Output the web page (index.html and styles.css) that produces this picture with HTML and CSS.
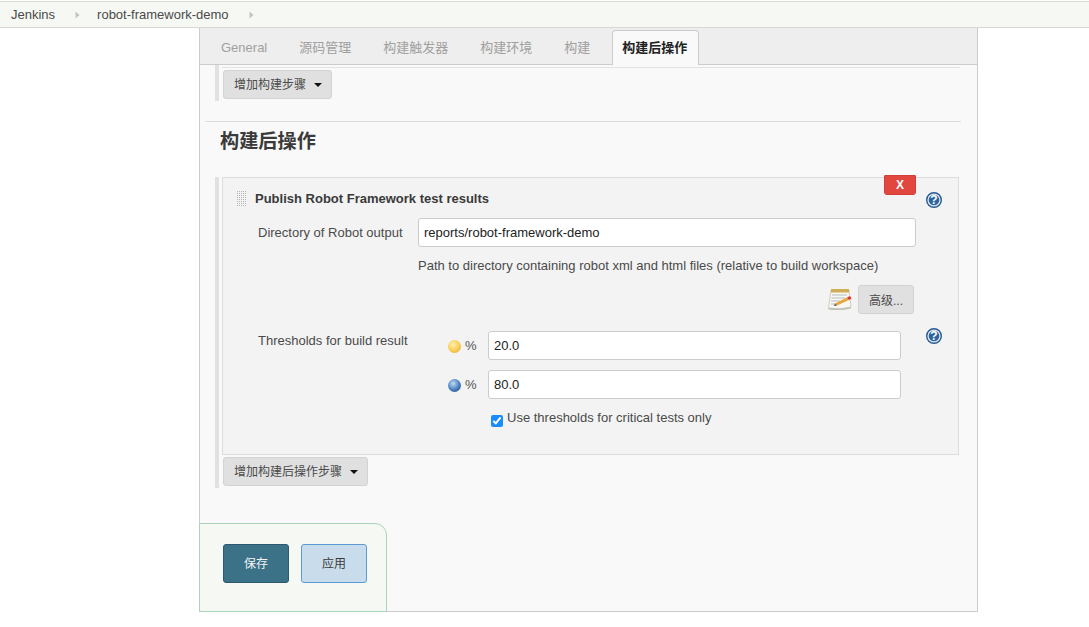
FILE: index.html

```html
<!DOCTYPE html>
<html lang="zh">
<head>
    <meta charset="UTF-8">
    <title>robot-framework-demo Config [Jenkins]</title>
    <link rel="stylesheet" href="styles.css">
</head>
<body>

<div class="breadcrumbs">
    <a class="crumb">Jenkins</a>
    <svg class="crumb-arrow" width="5" height="8" viewBox="0 0 5 8"><path d="M0.5 0.5 L4.5 4 L0.5 7.5 Z"/></svg>
    <a class="crumb">robot-framework-demo</a>
    <svg class="crumb-arrow" width="5" height="8" viewBox="0 0 5 8"><path d="M0.5 0.5 L4.5 4 L0.5 7.5 Z"/></svg>
</div>

<div class="panel">
    <div class="tabs">
        <div class="tab">General</div>
        <div class="tab">源码管理</div>
        <div class="tab">构建触发器</div>
        <div class="tab">构建环境</div>
        <div class="tab">构建</div>
        <div class="tab active">构建后操作</div>
    </div>

    <div class="build-steps">
        <div class="prev-line"></div>
        <button class="btn dropdown">增加构建步骤<span class="caret"></span></button>
    </div>

    <div class="section-head">
        <h2>构建后操作</h2>
    </div>

    <div class="steps">
        <div class="step">
            <button class="delete">X</button>
            <div class="step-title">
                <span class="handle"></span>
                <b>Publish Robot Framework test results</b>
                <svg class="help help-title" width="16" height="16" viewBox="0 0 16 16">
                    <circle cx="8" cy="8" r="7.3" fill="#dfe9f3" stroke="#27588f" stroke-width="1.4"/>
                    <circle cx="8" cy="8" r="5.3" fill="#2f659f"/>
                    <text x="8" y="12.200" text-anchor="middle" class="help-mark">?</text>
                </svg>
            </div>

            <div class="row">
                <label class="row-label">Directory of Robot output</label>
                <input class="text-input wide" value="reports/robot-framework-demo">
            </div>
            <div class="row-desc">Path to directory containing robot xml and html files (relative to build workspace)</div>

            <div class="advanced">
                <svg width="24" height="23" viewBox="0 0 24 23">
                    <path d="M3 2 H21 L23 19 Q12 22 0.500 20 Z" fill="#f8f8f0" stroke="#c4c4ba" stroke-width="0.8"/>
                    <path d="M0.500 20 Q12 22 23 19 V20.500 Q12 23 0.500 21.500 Z" fill="#bdbdb6"/>
                    <rect x="3" y="1" width="18" height="3.500" fill="#cfae57"/>
                    <path d="M4 7 H19 M3.500 10 H17 M3 13 H12 M3 16 H8" stroke="#b4bcc6"/>
                    <path d="M7 15.500 L19 9.500 L21 12 L9 17.500 Z" fill="#e6a53f"/>
                    <path d="M19 9.500 L22 8 L23.500 10.500 L21 12 Z" fill="#d9372c"/>
                    <path d="M7 15.500 L6 18 L9 17.500 Z" fill="#5a5040"/>
                </svg>
                <button class="btn adv-btn">高级...</button>
            </div>

            <div class="thresholds">
                <label class="row-label th-label">Thresholds for build result</label>
                <div class="th-fields">
                    <div class="th-row">
                        <span class="ball yellow"></span>
                        <span class="pct">%</span>
                        <input class="text-input narrow" value="20.0">
                    </div>
                    <div class="th-row">
                        <span class="ball blue"></span>
                        <span class="pct">%</span>
                        <input class="text-input narrow" value="80.0">
                    </div>
                    <label class="check-row">
                        <input type="checkbox" checked>
                        <span>Use thresholds for critical tests only</span>
                    </label>
                </div>
                <svg class="help" width="16" height="16" viewBox="0 0 16 16">
                    <circle cx="8" cy="8" r="7.3" fill="#dfe9f3" stroke="#27588f" stroke-width="1.4"/>
                    <circle cx="8" cy="8" r="5.3" fill="#2f659f"/>
                    <text x="8" y="12.200" text-anchor="middle" class="help-mark">?</text>
                </svg>
            </div>
        </div>
        <button class="btn dropdown">增加构建后操作步骤<span class="caret"></span></button>
    </div>

    <div class="bottom-bar">
        <button class="btn-save">保存</button>
        <button class="btn-apply">应用</button>
    </div>
</div>

</body>
</html>
```

FILE: styles.css

```css
html, body { margin: 0; padding: 0; }
body { font-family: "Liberation Sans", "Noto Sans CJK SC", sans-serif; font-size: 13px; color: #333; background: #fff; height: 627px; overflow: hidden; }

.breadcrumbs { margin-top: 1px; height: 25px; display: flex; align-items: center; padding-left: 11px; background: #f6f8f3; border-top: 1px solid #d8d8d4; border-bottom: 1px solid #d8d8d4; }
.crumb { color: #4a4a4a; font-size: 13px; }
.crumb-arrow { fill: #c4c4c4; margin: 1px 17px 0 20px; }

.panel { margin-left: 199px; width: 777px; height: 583px; background: #f9f9f9; border: 1px solid #ccc; border-top: 0; position: relative; }

.tabs { display: flex; height: 36px; padding-left: 10px; background: #eee; border-bottom: 1px solid #ccc; align-items: flex-end; }
.tab { height: 33px; line-height: 33px; padding: 0 10px; margin-right: 10px; border: 1px solid transparent; border-bottom: 0; color: #a0a0a0; white-space: nowrap; }
.tab.active { color: #222; font-weight: bold; background: #f9f9f9; border-color: #ccc; border-radius: 4px 4px 0 0; height: 34px; margin-bottom: -1px; margin-left: 1px; padding: 0 11px 0 9px; }

.build-steps { box-sizing: border-box; margin-left: 15px; border-left: 4px solid #e1e1e1; height: 36px; padding-top: 2px; }
.prev-line { height: 1px; background: #e2e2e2; margin-left: 3px; margin-right: 17px; }

.btn { background: #e0e0e0; border: 1px solid #d3d3d3; border-radius: 3px; color: #4a4a4a; font-family: inherit; font-size: 12px; padding: 0; }
.dropdown { display: flex; align-items: center; height: 29px; padding: 0 9px 2px 10px; margin-left: 4px; margin-top: 2px; }
.caret { width: 0; height: 0; border-left: 4px solid transparent; border-right: 4px solid transparent; border-top: 4px solid #111; margin-left: 8px; margin-top: 3px; }

.section-head { margin: 20px 16px 0 5px; border-top: 1px solid #ddd; height: 55px; }
.section-head h2 { margin: 0; padding: 7px 0 0 15px; font-size: 19.200px; font-weight: bold; line-height: 25px; color: #3a3a3a; }

.steps { margin-left: 15px; border-left: 4px solid #e1e1e1; height: 311px; }

.step { position: relative; margin-left: 3px; width: 735px; height: 276px; background: #f3f3f3; border: 1px solid #ddd; margin-bottom: 2px; }
.steps > .dropdown { margin-top: 0; }
.delete { position: absolute; left: 661px; top: -3px; width: 32px; height: 20px; padding: 0; background: #e1473f; border: 1px solid #d23f38; border-radius: 1px 1px 3px 3px; color: #fff; font-family: inherit; font-size: 12px; font-weight: bold; }

.step-title { display: flex; align-items: center; height: 20px; margin-top: 10px; padding-left: 13px; color: #333; }
.step-title b { font-size: 13px; margin-left: 8px; color: #3a3a3a; }
.handle { width: 11px; height: 17px; margin-top: 1px; background: linear-gradient(#f3f3f3 1px, transparent 1px) 0 0 / 2px 2px, linear-gradient(90deg, #f3f3f3 1px, #b4b4b4 1px) 0 0 / 2px 2px; }
.help-title { position: absolute; right: 16px; top: 14px; }
.help-mark { font-family: "Liberation Sans", sans-serif; font-size: 12px; font-weight: bold; fill: #fff; }

.row { display: flex; align-items: center; margin-top: 10px; padding-left: 35px; }
.row-label { display: block; width: 160px; color: #4a4a4a; font-size: 13px; white-space: nowrap; }
.text-input { box-sizing: border-box; height: 29px; padding: 0 5px; border: 1px solid #ccc; border-radius: 3px; background: #fff; color: #222; font-family: inherit; font-size: 13px; outline: 0; }
.wide { width: 498px; }
.narrow { width: 413px; }
.row-desc { margin: 10px 0 0 195px; line-height: 17px; color: #4a4a4a; font-size: 13px; white-space: nowrap; }

.advanced { display: flex; align-items: center; justify-content: flex-end; gap: 6px; margin-top: 11px; padding-right: 44px; }
.adv-btn { width: 56px; height: 29px; }

.thresholds { display: flex; margin-top: 17px; padding-left: 35px; position: relative; }
.th-label { margin-top: 2px; width: 190px; line-height: 16px; }
.th-fields { display: flex; flex-direction: column; gap: 10px; }
.th-row { display: flex; align-items: center; }
.ball { width: 13px; height: 13px; border-radius: 50%; margin-right: 4px; margin-top: 2px; }
.yellow { background: radial-gradient(circle at 40% 35%, #fff0b0, #f9cb50 55%, #d69c22); }
.blue { background: radial-gradient(circle at 40% 35%, #c3dcf3, #4f86c2 50%, #173f78); }
.pct { width: 23px; color: #555; font-size: 13px; }
.check-row { display: flex; align-items: flex-start; margin: 1px 0 0 40px; color: #4a4a4a; font-size: 13px; }
.check-row input { margin: 5px 4px 0 3px; width: 12px; height: 12px; accent-color: #1a8cff; }
.thresholds .help { position: absolute; left: 703px; top: -3px; }

.bottom-bar { position: absolute; left: -1px; bottom: -1px; box-sizing: border-box; width: 188px; height: 89px; display: flex; gap: 12px; padding: 20px 0 0 23px; background: #f6f8f3; border: 1px solid #a9d4b8; border-radius: 0 12px 0 2px; }
.btn-save, .btn-apply { box-sizing: border-box; width: 66px; height: 39px; border-radius: 3px; font-family: inherit; font-size: 12px; padding: 0 0 2px; }
.btn-save { background: #3b7288; border: 1px solid #2b5a70; color: #f4f4f4; }
.btn-apply { background: #c9dcec; border: 1px solid #5a9bd5; color: #3a3a3a; }
```
